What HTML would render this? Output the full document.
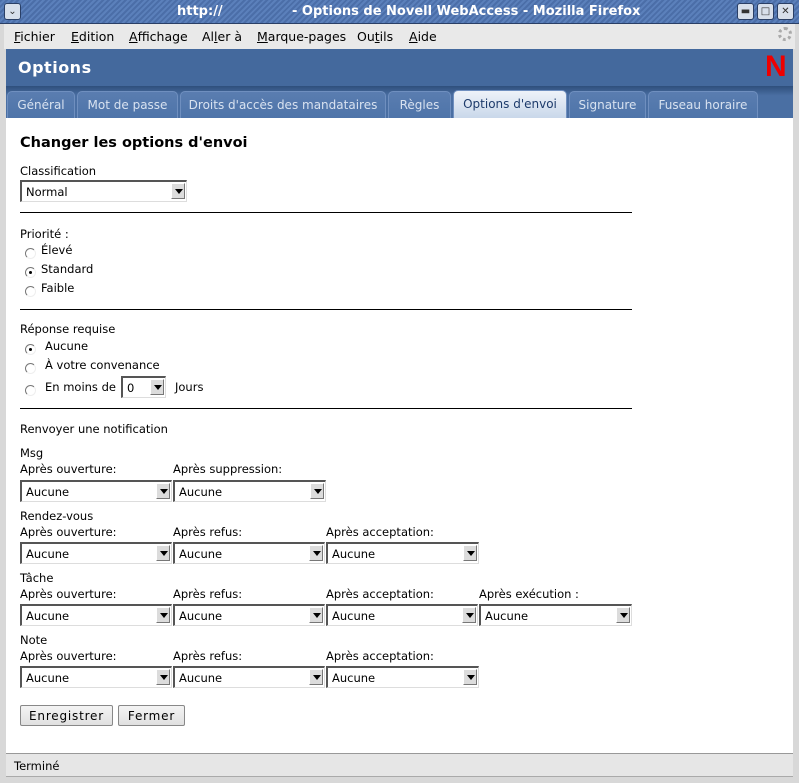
<!DOCTYPE html>
<html><head><meta charset="utf-8"><style>
*{margin:0;padding:0;box-sizing:border-box}
body{width:799px;height:783px;position:relative;overflow:hidden;background:#d8d8d8;font-family:"DejaVu Sans","Liberation Sans",sans-serif;font-size:12px;color:#000}
.a{position:absolute;white-space:nowrap}
.t{position:absolute;white-space:nowrap;line-height:14px;font-size:11.5px}
#title{left:0;top:0;width:799px;height:24px;background:repeating-linear-gradient(135deg,#4b6ea8 0 2px,#5b80bb 2px 4px);border-bottom:1px solid #2a3f66}
#menu{left:4px;top:24px;width:791px;height:25px;background:#e9e9e9}
#hdr{left:6px;top:49px;width:787px;height:37px;background:#44699d}
#tabs{left:6px;top:86px;width:787px;height:32px;background:linear-gradient(#2f4f7c,#4a6fa3 30%,#4a6fa3)}
.tab{position:absolute;top:91px;height:27px;background:linear-gradient(#5a7db0,#4e74a9);border:1px solid #6f8fbf;border-bottom:none;border-radius:5px 5px 0 0;color:#d8e2f0;font-size:12px;line-height:26px;text-align:center;white-space:nowrap;overflow:hidden}
.tab.on{background:linear-gradient(#eef3f9,#c9d8ea);color:#1d3b6b;top:90px;height:28px}
#content{left:6px;top:118px;width:787px;height:635px;background:#fff}
#status{left:6px;top:753px;width:787px;height:24px;background:#e6e6e6;border-top:1px solid #999;border-bottom:1px solid #aaa}
.sel{position:absolute;height:22px;background:#fff;border-top:2px solid #555;border-left:2px solid #555;border-right:1px solid #ddd;border-bottom:1px solid #ddd}
.sel span{position:absolute;left:4px;top:3px;line-height:15px;font-size:11.5px}
.sel i{position:absolute;right:1px;top:1px;width:14px;height:16px;background:#dcdcdc;border-top:1px solid #fff;border-left:1px solid #fff;border-right:1px solid #777;border-bottom:1px solid #777}
.sel i:after{content:"";position:absolute;left:3px;top:5px;border-left:4px solid transparent;border-right:4px solid transparent;border-top:5px solid #000}
.hr{position:absolute;left:20px;width:612px;height:1px;background:#000}
.rad{position:absolute;width:11px;height:11px;border-radius:50%;border-top:1px solid #777;border-left:1px solid #777;border-right:1px solid #eee;border-bottom:1px solid #eee;background:#fff}
.rad.on:after{content:"";position:absolute;left:3px;top:3px;width:3px;height:3px;background:#000;border-radius:50%}
.btn{position:absolute;height:21px;background:linear-gradient(#f4f4f4,#e0e0e0);border:1px solid #888;border-radius:2px;font-size:12px;line-height:20px;text-align:center;letter-spacing:.8px}
.wb{position:absolute;top:3px;width:17px;height:17px;border:1px solid #2a3f66;border-radius:3px;background:#d7dfeb;font-size:10px;line-height:15px;text-align:center;color:#333}
.m{position:absolute;top:29px;font-size:12.5px;white-space:nowrap}
u{text-decoration:underline}
</style></head><body>
<div class="a" id="title"></div>
<div class="wb" style="left:4px">&#8964;</div>
<div class="a" style="left:177px;top:4px;color:#fff;font-weight:bold;font-size:13px">http://</div>
<div class="a" style="left:292px;top:4px;color:#fff;font-weight:bold;font-size:13px">- Options de Novell WebAccess - Mozilla Firefox</div>
<div class="wb" style="left:737px">&#9644;</div>
<div class="wb" style="left:757px">&#9633;</div>
<div class="wb" style="left:777px">&#10005;</div>
<div class="a" id="menu"></div>
<div class="m" style="left:14px"><u>F</u>ichier</div>
<div class="m" style="left:71px"><u>E</u>dition</div>
<div class="m" style="left:129px"><u>A</u>ffichage</div>
<div class="m" style="left:202px">Al<u>l</u>er à</div>
<div class="m" style="left:257px"><u>M</u>arque-pages</div>
<div class="m" style="left:357px">Ou<u>t</u>ils</div>
<div class="m" style="left:409px"><u>A</u>ide</div>
<div class="a" style="left:778px;top:27px;width:14px;height:14px;border:3px dotted #aaa;border-radius:50%"></div>
<div class="a" id="hdr"></div>
<div class="a" style="left:18px;top:58px;color:#fff;font-weight:bold;font-size:16px;letter-spacing:.5px">Options</div>
<div class="a" style="left:765px;top:50px;color:#e00;font-weight:bold;font-size:30px;font-family:'Liberation Sans',sans-serif">N</div>
<div class="a" id="tabs"></div>
<div class="tab" style="left:7px;width:68px">Général</div>
<div class="tab" style="left:77px;width:101px">Mot de passe</div>
<div class="tab" style="left:180px;width:206px">Droits d'accès des mandataires</div>
<div class="tab" style="left:388px;width:63px">Règles</div>
<div class="tab on" style="left:453px;width:114px">Options d'envoi</div>
<div class="tab" style="left:569px;width:77px">Signature</div>
<div class="tab" style="left:648px;width:110px">Fuseau horaire</div>
<div class="a" id="content"></div>
<div class="a" style="left:20px;top:135px;font-weight:bold;font-size:14.5px">Changer les options d'envoi</div>
<div class="t" style="left:20px;top:164px">Classification</div>
<div class="sel" style="left:20px;top:180px;width:167px"><span>Normal</span><i></i></div>
<div class="hr" style="top:212px"></div>
<div class="t" style="left:20px;top:227px">Priorité :</div>
<div class="rad" style="left:25px;top:248px"></div><div class="t" style="left:41px;top:243px">Élevé</div>
<div class="rad on" style="left:25px;top:267px"></div><div class="t" style="left:41px;top:262px">Standard</div>
<div class="rad" style="left:25px;top:286px"></div><div class="t" style="left:41px;top:281px">Faible</div>
<div class="hr" style="top:309px"></div>
<div class="t" style="left:20px;top:322px">Réponse requise</div>
<div class="rad on" style="left:25px;top:344px"></div><div class="t" style="left:45px;top:339px">Aucune</div>
<div class="rad" style="left:25px;top:363px"></div><div class="t" style="left:45px;top:358px">À votre convenance</div>
<div class="rad" style="left:25px;top:385px"></div><div class="t" style="left:45px;top:380px">En moins de</div>
<div class="sel" style="left:121px;top:376px;width:45px"><span>0</span><i></i></div>
<div class="t" style="left:175px;top:380px">Jours</div>
<div class="hr" style="top:408px"></div>
<div class="t" style="left:20px;top:422px">Renvoyer une notification</div>

<div class="t" style="left:20px;top:446px">Msg</div>
<div class="t" style="left:20px;top:462px">Après ouverture:</div>
<div class="t" style="left:173px;top:462px">Après suppression:</div>
<div class="sel" style="left:20px;top:480px;width:152px"><span>Aucune</span><i></i></div>
<div class="sel" style="left:173px;top:480px;width:153px"><span>Aucune</span><i></i></div>

<div class="t" style="left:20px;top:509px">Rendez-vous</div>
<div class="t" style="left:20px;top:525px">Après ouverture:</div>
<div class="t" style="left:173px;top:525px">Après refus:</div>
<div class="t" style="left:326px;top:525px">Après acceptation:</div>
<div class="sel" style="left:20px;top:542px;width:152px"><span>Aucune</span><i></i></div>
<div class="sel" style="left:173px;top:542px;width:152px"><span>Aucune</span><i></i></div>
<div class="sel" style="left:326px;top:542px;width:153px"><span>Aucune</span><i></i></div>

<div class="t" style="left:20px;top:571px">Tâche</div>
<div class="t" style="left:20px;top:587px">Après ouverture:</div>
<div class="t" style="left:173px;top:587px">Après refus:</div>
<div class="t" style="left:326px;top:587px">Après acceptation:</div>
<div class="t" style="left:479px;top:587px">Après exécution :</div>
<div class="sel" style="left:20px;top:604px;width:152px"><span>Aucune</span><i></i></div>
<div class="sel" style="left:173px;top:604px;width:152px"><span>Aucune</span><i></i></div>
<div class="sel" style="left:326px;top:604px;width:152px"><span>Aucune</span><i></i></div>
<div class="sel" style="left:479px;top:604px;width:153px"><span>Aucune</span><i></i></div>

<div class="t" style="left:20px;top:633px">Note</div>
<div class="t" style="left:20px;top:649px">Après ouverture:</div>
<div class="t" style="left:173px;top:649px">Après refus:</div>
<div class="t" style="left:326px;top:649px">Après acceptation:</div>
<div class="sel" style="left:20px;top:666px;width:152px"><span>Aucune</span><i></i></div>
<div class="sel" style="left:173px;top:666px;width:152px"><span>Aucune</span><i></i></div>
<div class="sel" style="left:326px;top:666px;width:153px"><span>Aucune</span><i></i></div>

<div class="btn" style="left:20px;top:705px;width:93px">Enregistrer</div>
<div class="btn" style="left:118px;top:705px;width:67px">Fermer</div>

<div class="a" id="status"></div>
<div class="a" style="left:14px;top:759px;font-size:11.5px">Terminé</div>
</body></html>
